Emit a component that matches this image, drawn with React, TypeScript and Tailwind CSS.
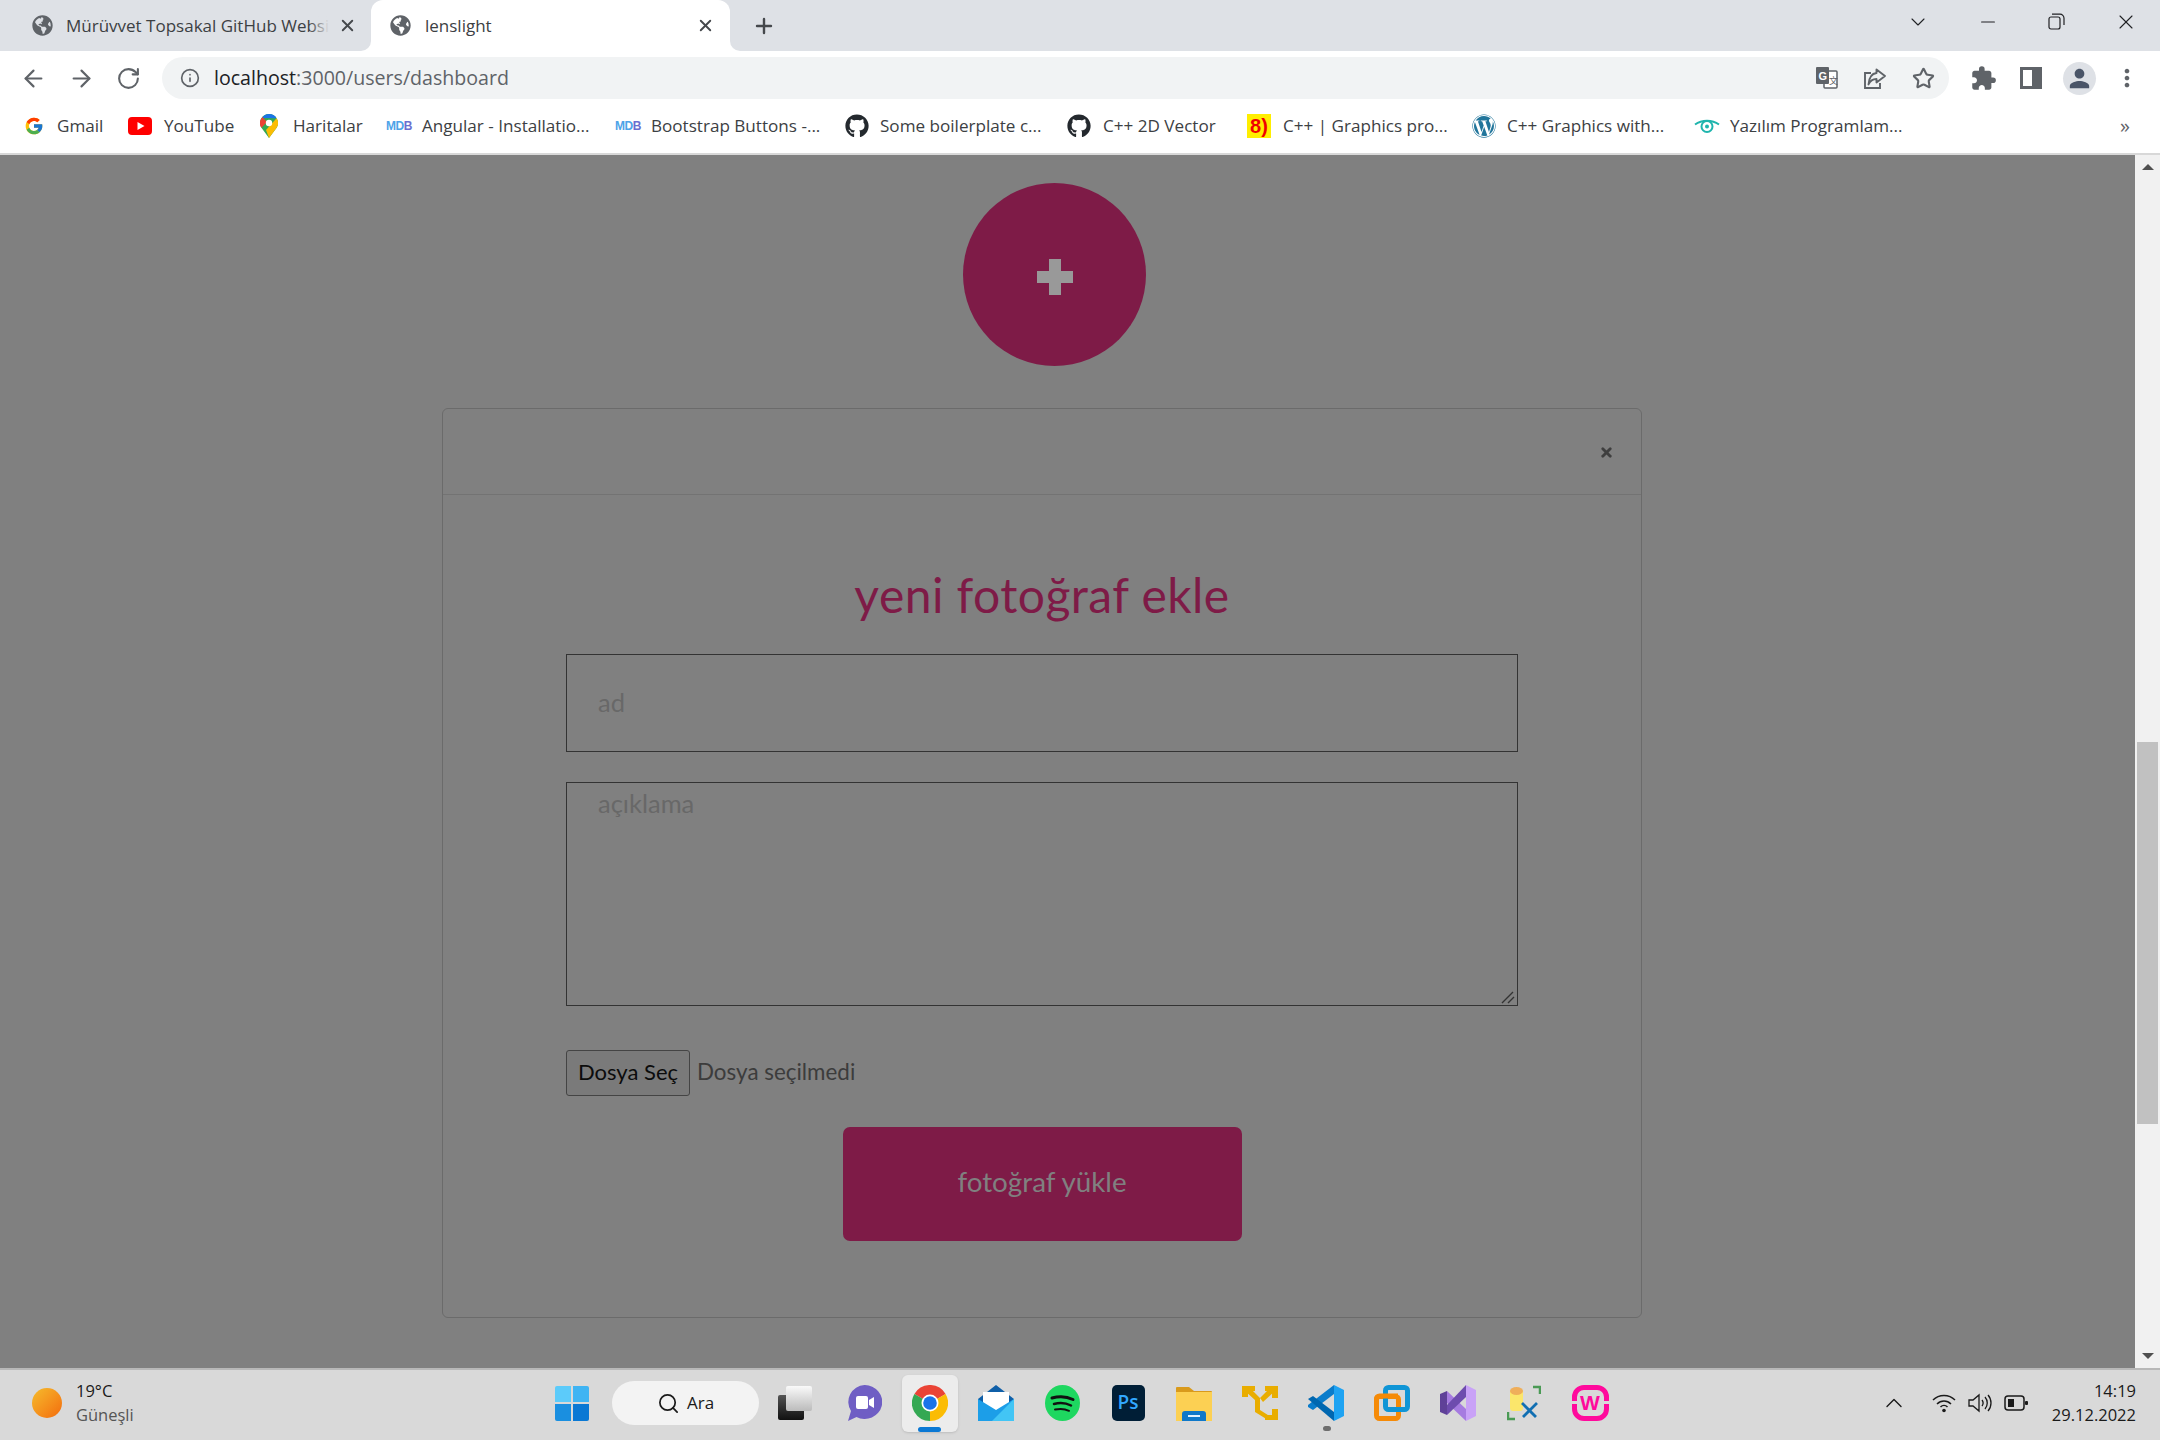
import { ArrowLeft, ArrowRight, ChevronDown, ChevronUp, Info, Minus, Plus, RotateCw, Search, Star, X } from 'lucide-react';
import type { ReactNode } from 'react';
import { FaGithub, FaGlobeAmericas, FaWordpress } from 'react-icons/fa';
import { FcGoogle } from 'react-icons/fc';
import { MdExtension, MdMoreVert, MdPerson } from 'react-icons/md';

const uiFont = "font-['Open_Sans','Noto_Sans',sans-serif]";

const MdbIcon = () => (
  <span className="w-[25px] text-[12px] leading-none font-extrabold tracking-[-0.5px] text-[#4da3e8] font-['Liberation_Sans',sans-serif]">
    MD<span className="text-[#6a6fd0]">B</span>
  </span>
);

const YoutubeIcon = () => (
  <svg width="24" height="18" viewBox="0 0 24 18">
    <rect width="24" height="18" rx="4" fill="#f00" />
    <path d="M9.5 5v8l7-4z" fill="#fff" />
  </svg>
);

const MapsIcon = () => (
  <svg width="18" height="24" viewBox="0 0 18 24">
    <path d="M9 0a9 9 0 0 1 7.6 13.8L9 24 1.4 13.8A9 9 0 0 1 9 0z" fill="#34a853" />
    <path d="M9 0a9 9 0 0 1 7.6 4.2L2 4A9 9 0 0 1 9 0z" fill="#1a73e8" />
    <path d="M2.4 3A9 9 0 0 0 1.4 13.8L7 8z" fill="#ea4335" />
    <path d="M16.6 4.2A9 9 0 0 1 16.6 13.8L9 24l-3-8z" fill="#fbbc04" />
    <circle cx="9" cy="9" r="3.2" fill="#fff" />
  </svg>
);

const EyeIcon = () => (
  <svg width="26" height="14" viewBox="0 0 26 14" fill="none">
    <path d="M1 5.5C8 .5 18 .5 25 5.5" stroke="#1fb5ad" strokeWidth="2" />
    <circle cx="13" cy="7.5" r="5.5" stroke="#1fb5ad" strokeWidth="2" />
    <circle cx="13" cy="7.5" r="2" fill="#1fb5ad" />
  </svg>
);

const bookmarks: { label: string; icon: ReactNode; w: string; gap: string }[] = [
  { label: 'Gmail', icon: <FcGoogle size={20} />, w: 'w-[104px]', gap: 'gap-[13px]' },
  { label: 'YouTube', icon: <YoutubeIcon />, w: 'w-[132px]', gap: 'gap-[12px]' },
  { label: 'Haritalar', icon: <MapsIcon />, w: 'w-[126px]', gap: 'gap-[15px]' },
  { label: 'Angular - Installatio...', icon: <MdbIcon />, w: 'w-[229px]', gap: 'gap-[11px]' },
  { label: 'Bootstrap Buttons -...', icon: <MdbIcon />, w: 'w-[230px]', gap: 'gap-[11px]' },
  { label: 'Some boilerplate c...', icon: <FaGithub size={24} color="#24292e" />, w: 'w-[222px]', gap: 'gap-[11px]' },
  { label: 'C++ 2D Vector', icon: <FaGithub size={24} color="#24292e" />, w: 'w-[180px]', gap: 'gap-[12px]' },
  {
    label: 'C++ | Graphics pro...',
    icon: (
      <span className="w-[24px] h-[24px] bg-[#ffee00] text-[#f00000] text-[20px] leading-[24px] text-center font-bold font-['Liberation_Sans',sans-serif]">
        8)
      </span>
    ),
    w: 'w-[225px]',
    gap: 'gap-[12px]',
  },
  { label: 'C++ Graphics with...', icon: <FaWordpress size={24} color="#21759b" />, w: 'w-[222px]', gap: 'gap-[11px]' },
  { label: 'Yazılım Programlam...', icon: <EyeIcon />, w: 'w-[220px]', gap: 'gap-[10px]' },
];

const Tabs = () => (
  <div className={`h-[51px] bg-[#dee1e6] flex items-stretch text-[#3c4043] text-[17px] ${uiFont}`}>
    <div className="w-[371px] pl-[32px] flex items-center">
      <FaGlobeAmericas size={21} color="#5f6368" />
      <div className="relative w-[263px] ml-[13px] overflow-hidden whitespace-nowrap">
        Mürüvvet Topsakal GitHub Websi
        <div className="absolute right-0 top-0 bottom-0 w-[20px] bg-gradient-to-r from-transparent to-[#dee1e6]" />
      </div>
      <X size={19} strokeWidth={2.4} color="#45484c" className="ml-[9px]" />
    </div>

    <div className="relative w-[359px] bg-white rounded-t-[12px] flex items-center pl-[19px] pr-[15px]">
      <div className="absolute -left-[10px] bottom-0 w-[10px] h-[10px] bg-white">
        <div className="w-full h-full bg-[#dee1e6] rounded-br-[10px]" />
      </div>
      <div className="absolute -right-[10px] bottom-0 w-[10px] h-[10px] bg-white">
        <div className="w-full h-full bg-[#dee1e6] rounded-bl-[10px]" />
      </div>
      <FaGlobeAmericas size={21} color="#5f6368" />
      <span className="ml-[14px] flex-1">lenslight</span>
      <X size={19} strokeWidth={2.4} color="#45484c" />
    </div>

    <div className="ml-[22px] flex items-center">
      <Plus size={24} strokeWidth={2.4} color="#45484c" />
    </div>

    {/* window buttons */}
    <div className="ml-auto flex items-center pr-[22px] pb-[8px] text-[#202124]">
      <ChevronDown size={24} strokeWidth={1.1} />
      <Minus size={22} strokeWidth={1.2} className="ml-[47px]" />
      <svg width="17" height="17" viewBox="0 0 17 17" fill="none" stroke="#202124" strokeWidth="1.2" className="ml-[49px]">
        <rect x="1" y="4" width="11" height="12" rx="2" />
        <path d="M4 1.2h8a4 4 0 0 1 4 4V12" />
      </svg>
      <X size={24} strokeWidth={1.1} className="ml-[49px]" />
    </div>
  </div>
);

const Toolbar = () => (
  <div className={`h-[52px] bg-white flex items-center pt-[2px] text-[#5f6368] ${uiFont}`}>
    <div className="w-[162px] pl-[20px] flex items-center gap-[21px]">
      <ArrowLeft size={27} strokeWidth={1.9} />
      <ArrowRight size={27} strokeWidth={1.9} />
      <RotateCw size={25} strokeWidth={2} />
    </div>
    <div className="w-[1787px] h-[42px] bg-[#f1f3f4] rounded-full flex items-center pl-[18px] pr-[14px]">
      <Info size={20} strokeWidth={2} />
      <div className="ml-[14px] text-[19.600px] text-[#5f6368]">
        <span className="text-[#202124]">localhost</span>:3000/users/dashboard
      </div>
      <div className="ml-auto flex items-center gap-[25px]">
        <svg width="22" height="22" viewBox="0 0 22 22">
          <rect x="8" y="4" width="13" height="17" rx="1" fill="#fff" stroke="#5f6368" strokeWidth="1.5" />
          <rect x="0" y="0" width="13" height="17" rx="1" fill="#5f6368" />
          <text x="2.5" y="13" fontSize="11" fontWeight="700" fill="#fff" fontFamily="Liberation Sans">G</text>
          <text x="13" y="17" fontSize="9" fill="#5f6368" fontFamily="Noto Sans CJK SC">文</text>
        </svg>
        <svg width="24" height="24" viewBox="0 0 24 24" fill="none" stroke="#5f6368" strokeWidth="1.9">
          <path d="M8 7H2v15h15v-5" />
          <path d="M13.5 3.5 22 10l-8.500 6.500V13C9 13 7 15 5.500 18.500 6 12 8.500 7.500 13.500 7z" strokeLinejoin="round" />
        </svg>
        <Star size={23} strokeWidth={2.2} />
      </div>
    </div>
    <div className="flex items-center pl-[21px]">
      <MdExtension size={27} />
      <svg width="22" height="22" viewBox="0 0 22 22" className="ml-[23px]">
        <path d="M0 0h22v22H0zM3 3v16h9V3z" fill="#5f6368" fillRule="evenodd" />
      </svg>
      <div className="ml-[21px] w-[33px] h-[33px] rounded-full bg-[#dee1e6] flex items-center justify-center">
        <MdPerson size={29} color="#4a5568" />
      </div>
      <MdMoreVert size={28} className="ml-[17px]" />
    </div>
  </div>
);

const BookmarkBar = () => (
  <div className={`h-[52px] bg-white border-b-2 border-[#d8d8d8] pl-[24px] pr-[30px] pb-[4px] flex items-center text-[17.100px] text-[#3c4043] ${uiFont}`}>
    {bookmarks.map((b) => (
      <div key={b.label} className={`${b.w} ${b.gap} flex items-center shrink-0 whitespace-nowrap`}>
        {b.icon}
        <span>{b.label}</span>
      </div>
    ))}
    <span className="ml-auto text-[20px] leading-none text-[#5f6368]">»</span>
  </div>
);

const Scrollbar = () => (
  <div className="w-[25px] bg-[#f1f1f1] flex flex-col items-center">
    <div className="mt-[9px] w-0 h-0 border-x-[6px] border-x-transparent border-b-[6px] border-b-[#505050]" />
    <div className="mt-[572px] w-[21px] h-[382px] bg-[#c1c1c1]" />
    <div className="mt-auto mb-[9px] w-0 h-0 border-x-[6px] border-x-transparent border-t-[6px] border-t-[#505050]" />
  </div>
);

const Cross = () => (
  <svg width="36" height="36" viewBox="0 0 36 36" className="mt-[4px]">
    <path d="M12 0h12v12h12v12H24v12H12V24H0V12h12z" fill="#999" />
  </svg>
);

const Dashboard = () => (
  <main className={`flex-1 bg-[#808080] pl-[442px] font-['Lato','Open_Sans',sans-serif]`}>
    <div className="mt-[28px] ml-[521px] w-[183px] h-[183px] rounded-full bg-[#7e1b47] flex items-center justify-center">
      <Cross />
    </div>

    <div className="mt-[42px] w-[1200px] h-[910px] border border-[#6b6b6b] rounded-[6px]">
      <div className="h-[86px] border-b border-[#737373] flex items-center justify-end pr-[27px] pt-[2px]">
        <X size={15} strokeWidth={4.5} color="#3f3f3f" />
      </div>
      <div className="px-[123px] pt-[70px]">
        <h1 className="h-[60px] text-center text-[#7e1b47] text-[48px] tracking-[0.45px] leading-[60px] mb-[29px]">yeni fotoğraf ekle</h1>
        <input
          placeholder="ad"
          className="block w-full h-[98px] border-[1.5px] border-[#333] pl-[31px] pb-[2px] text-[25.500px] outline-none bg-transparent placeholder:text-[#686868]"
        />
        <div className="relative mt-[30px]">
          <textarea
            placeholder="açıklama"
            className="block w-full h-[224px] resize-none border-[1.5px] border-[#333] pl-[31px] pr-[30px] py-[1px] text-[25.500px] outline-none bg-transparent placeholder:text-[#686868]"
          />
          <svg width="14" height="14" viewBox="0 0 14 14" fill="none" stroke="#333" strokeWidth="1.400" className="absolute right-[3px] bottom-[2px]">
            <path d="M1 13 12 2M7 13l6-6" />
          </svg>
        </div>
        <div className="mt-[44px] flex items-center">
          <button className="w-[124px] h-[46px] bg-[#7a7a7a] border border-[#444] rounded-[3px] pb-[3px] text-[22px] text-[#0c0c0c]">Dosya Seç</button>
          <span className="ml-[7px] pb-[3px] text-[22.400px] text-[#3c3c3c]">Dosya seçilmedi</span>
        </div>
        <button className="block mx-auto mt-[31px] w-[399px] h-[114px] bg-[#7e1b47] rounded-[7px] pb-[4px] text-[27.800px] text-[#808080]">fotoğraf yükle</button>
      </div>
    </div>
  </main>
);

const TeamsIcon = () => (
  <svg width="35" height="36" viewBox="0 0 35 36">
    <path d="M17.500 0a17.500 17 0 1 1-8 32L1 36l3-10A17.500 17 0 0 1 17.500 0z" fill="#6f5ec4" />
    <rect x="9" y="11" width="12" height="13" rx="2" fill="#fff" />
    <path d="M22 15l5-3v11l-5-3z" fill="#fff" />
  </svg>
);

const ChromeIcon = () => (
  <svg width="36" height="36" viewBox="0 0 36 36">
    <path d="M18 18 2.400 9A18 18 0 0 1 33.600 9z" fill="#ea4335" />
    <path d="M18 18 33.600 9A18 18 0 0 1 18 36z" fill="#fbbc04" />
    <path d="M18 18 18 36A18 18 0 0 1 2.400 9z" fill="#34a853" />
    <circle cx="18" cy="18" r="8.500" fill="#fff" />
    <circle cx="18" cy="18" r="6.800" fill="#1a73e8" />
  </svg>
);

const MailIcon = () => (
  <svg width="36" height="36" viewBox="0 0 36 36">
    <path d="M18 0 36 14v22H0V14z" fill="#0f5fa8" />
    <path d="M5 7h26v14L18 28 5 21z" fill="#fff" />
    <path d="M0 14l18 11 18-11v22H0z" fill="#1c9ee8" />
    <path d="M36 14v22H14z" fill="#42c5f5" />
  </svg>
);

const SpotifyIcon = () => (
  <svg width="35" height="36" viewBox="0 0 35 36" fill="none" stroke="#111" strokeLinecap="round">
    <ellipse cx="17.500" cy="18" rx="17.500" ry="18" fill="#1ed760" stroke="none" />
    <path d="M7 13c7-2 15-1.500 21 1.500" strokeWidth="3" />
    <path d="M9 19c6-1.500 12-1 17 1.500" strokeWidth="2.500" />
    <path d="M10 24.500c5-1 10-.7 14 1.300" strokeWidth="2" />
  </svg>
);

const FolderIcon = () => (
  <svg width="36" height="36" viewBox="0 0 36 36">
    <path d="M0 3a1 1 0 0 1 1-1h12l5 4h17a1 1 0 0 1 1 1v6H0z" fill="#d99a1c" />
    <rect y="7" width="36" height="29" fill="#fcd053" />
    <path d="M6 36v-7a3 3 0 0 1 3-3h18a3 3 0 0 1 3 3v7z" fill="#0f78c9" />
    <rect x="12" y="30" width="12" height="2" fill="#dff1ff" />
  </svg>
);

const SplitIcon = () => (
  <svg width="36" height="36" viewBox="0 0 36 36" fill="#e9ad00">
    <path d="M0 1h13v5H6v6H0z" />
    <path d="M23 1h13v12h-6V6h-7z" />
    <path d="M36 35H23v-5h7v-6h6z" />
    <path d="M3 6l4-4 11 11v12l11 7-3 3-13-8V15z" />
    <path d="M33 6l-4-4-11 11 3 4z" />
  </svg>
);

const VscodeIcon = () => (
  <svg width="36" height="36" viewBox="0 0 36 36">
    <path d="M26 0v9L5 25l-5-3v-2z" fill="#0a7ccb" />
    <path d="M0 14l5-3 21 16v9z" fill="#0067b0" />
    <path d="M26 0l10 5v26l-10 5z" fill="#1fa3f2" />
  </svg>
);

const VmwareIcon = () => (
  <svg width="36" height="36" viewBox="0 0 36 36" fill="none" strokeWidth="5">
    <rect x="2.500" y="11.500" width="22" height="22" rx="3" stroke="#f58a07" />
    <rect x="11.500" y="2.500" width="22" height="22" rx="3" stroke="#0f95d6" />
    <path d="M2.500 22V14a3 3 0 0 1 3-3H24" stroke="#f58a07" />
  </svg>
);

const VisualStudioIcon = () => (
  <svg width="36" height="36" viewBox="0 0 36 36">
    <path d="M0 9l7-3v24l-7-3z" fill="#5f4198" />
    <path d="M7 6l19 18v12L7 18z" fill="#a67be0" />
    <path d="M26 0v12L7 30V20z" fill="#6e4cae" />
    <path d="M26 0l10 5v26l-10 5z" fill="#c9a2f7" />
  </svg>
);

const ToolsIcon = () => (
  <svg width="34" height="36" viewBox="0 0 34 36" fill="none">
    <path d="M26 2h7v7" stroke="#4a9a55" strokeWidth="2.500" />
    <path d="M1 27v7h7" stroke="#4a9a55" strokeWidth="2.500" />
    <rect x="3" y="4" width="13" height="22" rx="3" fill="#fbe66b" />
    <ellipse cx="9.500" cy="6" rx="6.500" ry="4" fill="#efae5a" />
    <path d="M15 18l14 14M30 18 16 32" stroke="#116fb2" strokeWidth="2.800" />
  </svg>
);

const WampIcon = () => (
  <span className="relative w-[37px] h-[36px] rounded-[12px] border-[5px] border-[#ff0a9c] text-[#ff0a9c] text-[21px] leading-[25px] text-center font-bold font-['Liberation_Sans',sans-serif]">
    W
    <span className="absolute -left-[5px] top-[11px] w-[5px] h-[3px] bg-[#d9d9d9]" />
    <span className="absolute -right-[5px] top-[11px] w-[5px] h-[3px] bg-[#d9d9d9]" />
  </span>
);

const taskbarIcons: ReactNode[] = [
  <TeamsIcon />,
  <ChromeIcon />,
  <MailIcon />,
  <SpotifyIcon />,
  <span className="w-[33px] h-[36px] rounded-[5px] bg-[#001e36] text-[#31a8ff] text-[19px] leading-[34px] text-center font-semibold font-['Open_Sans',sans-serif]">Ps</span>,
  <FolderIcon />,
  <SplitIcon />,
  <VscodeIcon />,
  <VmwareIcon />,
  <VisualStudioIcon />,
  <ToolsIcon />,
  <WampIcon />,
];

const Taskbar = () => (
  <footer className={`h-[72px] bg-[#d9d9d9] border-t-2 border-[#b8b8b8] pb-[4px] flex items-center ${uiFont}`}>
    <div className="w-[555px] pl-[32px] flex items-center shrink-0">
      <div className="w-[30px] h-[30px] rounded-full bg-gradient-to-br from-[#f4bb2c] to-[#f26a0c]" />
      <div className="ml-[14px] text-[16.500px] leading-[24px]">
        <div className="text-[#1a1a1a]">19°C</div>
        <div className="text-[#555]">Güneşli</div>
      </div>
    </div>

    <div className="w-[34px] h-[35px] grid grid-cols-2 gap-[1.500px] shrink-0">
      <div className="bg-[#5ccbfa] rounded-tl-[2px]" />
      <div className="bg-[#3fb4f3] rounded-tr-[2px]" />
      <div className="bg-[#1a8fe0] rounded-bl-[2px]" />
      <div className="bg-[#0a78d4] rounded-br-[2px]" />
    </div>

    <div className="ml-[23px] w-[147px] h-[44px] rounded-full bg-[#f3f3f3] flex items-center pl-[45px] text-[17px] text-[#1a1a1a] shrink-0">
      <Search size={23} strokeWidth={1.8} />
      <span className="ml-[7px]">Ara</span>
    </div>

    <div className="ml-[3px] mr-[3px] w-[66px] flex justify-center shrink-0">
      <div className="relative w-[34px] h-[34px]">
        <div className="absolute left-0 top-[9px] w-[26px] h-[25px] rounded-[2px] bg-gradient-to-b from-[#555] to-[#111]" />
        <div className="absolute left-[8px] top-0 w-[26px] h-[25px] rounded-[2px] bg-gradient-to-b from-[#fafafa] to-[#bbb]" />
      </div>
    </div>

    {taskbarIcons.map((icon, i) => (
      <div key={i} className="relative w-[66px] h-[57px] flex items-center justify-center shrink-0">
        {i === 1 && <div className="absolute left-[5px] top-0 w-[56px] h-[57px] rounded-[6px] bg-[#ececec] shadow-sm" />}
        {i === 1 && <div className="absolute left-[21px] bottom-0 w-[23px] h-[5px] rounded-full bg-[#0a78d4]" />}
        {i === 7 && <div className="absolute left-[30px] bottom-[1px] w-[8px] h-[5px] rounded-full bg-[#6e6e6e]" />}
        <div className="relative flex">{icon}</div>
      </div>
    ))}

    <div className="ml-auto flex items-center pr-[24px] text-[#1a1a1a]">
      <ChevronUp size={28} strokeWidth={1.2} />
      <svg width="24" height="20" viewBox="0 0 24 20" fill="none" stroke="#1a1a1a" strokeWidth="1.500" className="ml-[24px]">
        <path d="M1 7c6-6 16-6 22 0M5 11c4-4 10-4 14 0M8.500 14c2-2 5-2 7 0" />
        <circle cx="12" cy="17.500" r="1.800" fill="#1a1a1a" stroke="none" />
      </svg>
      <svg width="24" height="20" viewBox="0 0 24 20" fill="none" stroke="#1a1a1a" strokeWidth="1.300" className="ml-[12px]">
        <path d="M1 7h4l6-5v16l-6-5H1zM14 7c1.500 2 1.500 4 0 6M17 4c3 3.500 3 8.500 0 12M20 2c4 4.500 4 11.500 0 16" />
      </svg>
      <svg width="24" height="16" viewBox="0 0 24 16" fill="none" className="ml-[12px]">
        <rect x="1" y="1" width="19" height="14" rx="3" stroke="#1a1a1a" strokeWidth="1.500" />
        <rect x="4" y="4" width="6" height="8" fill="#1a1a1a" />
        <rect x="21" y="6" width="3" height="4" rx="1" fill="#1a1a1a" />
      </svg>
      <div className="ml-[24px] text-right text-[16.500px] leading-[24px]">
        <div>14:19</div>
        <div>29.12.2022</div>
      </div>
    </div>
  </footer>
);

const App = () => (
  <div className="w-[2160px] h-[1440px] overflow-hidden flex flex-col">
    <Tabs />
    <Toolbar />
    <BookmarkBar />
    <div className="flex-1 flex min-h-0">
      <Dashboard />
      <Scrollbar />
    </div>
    <Taskbar />
  </div>
);

export default App;
